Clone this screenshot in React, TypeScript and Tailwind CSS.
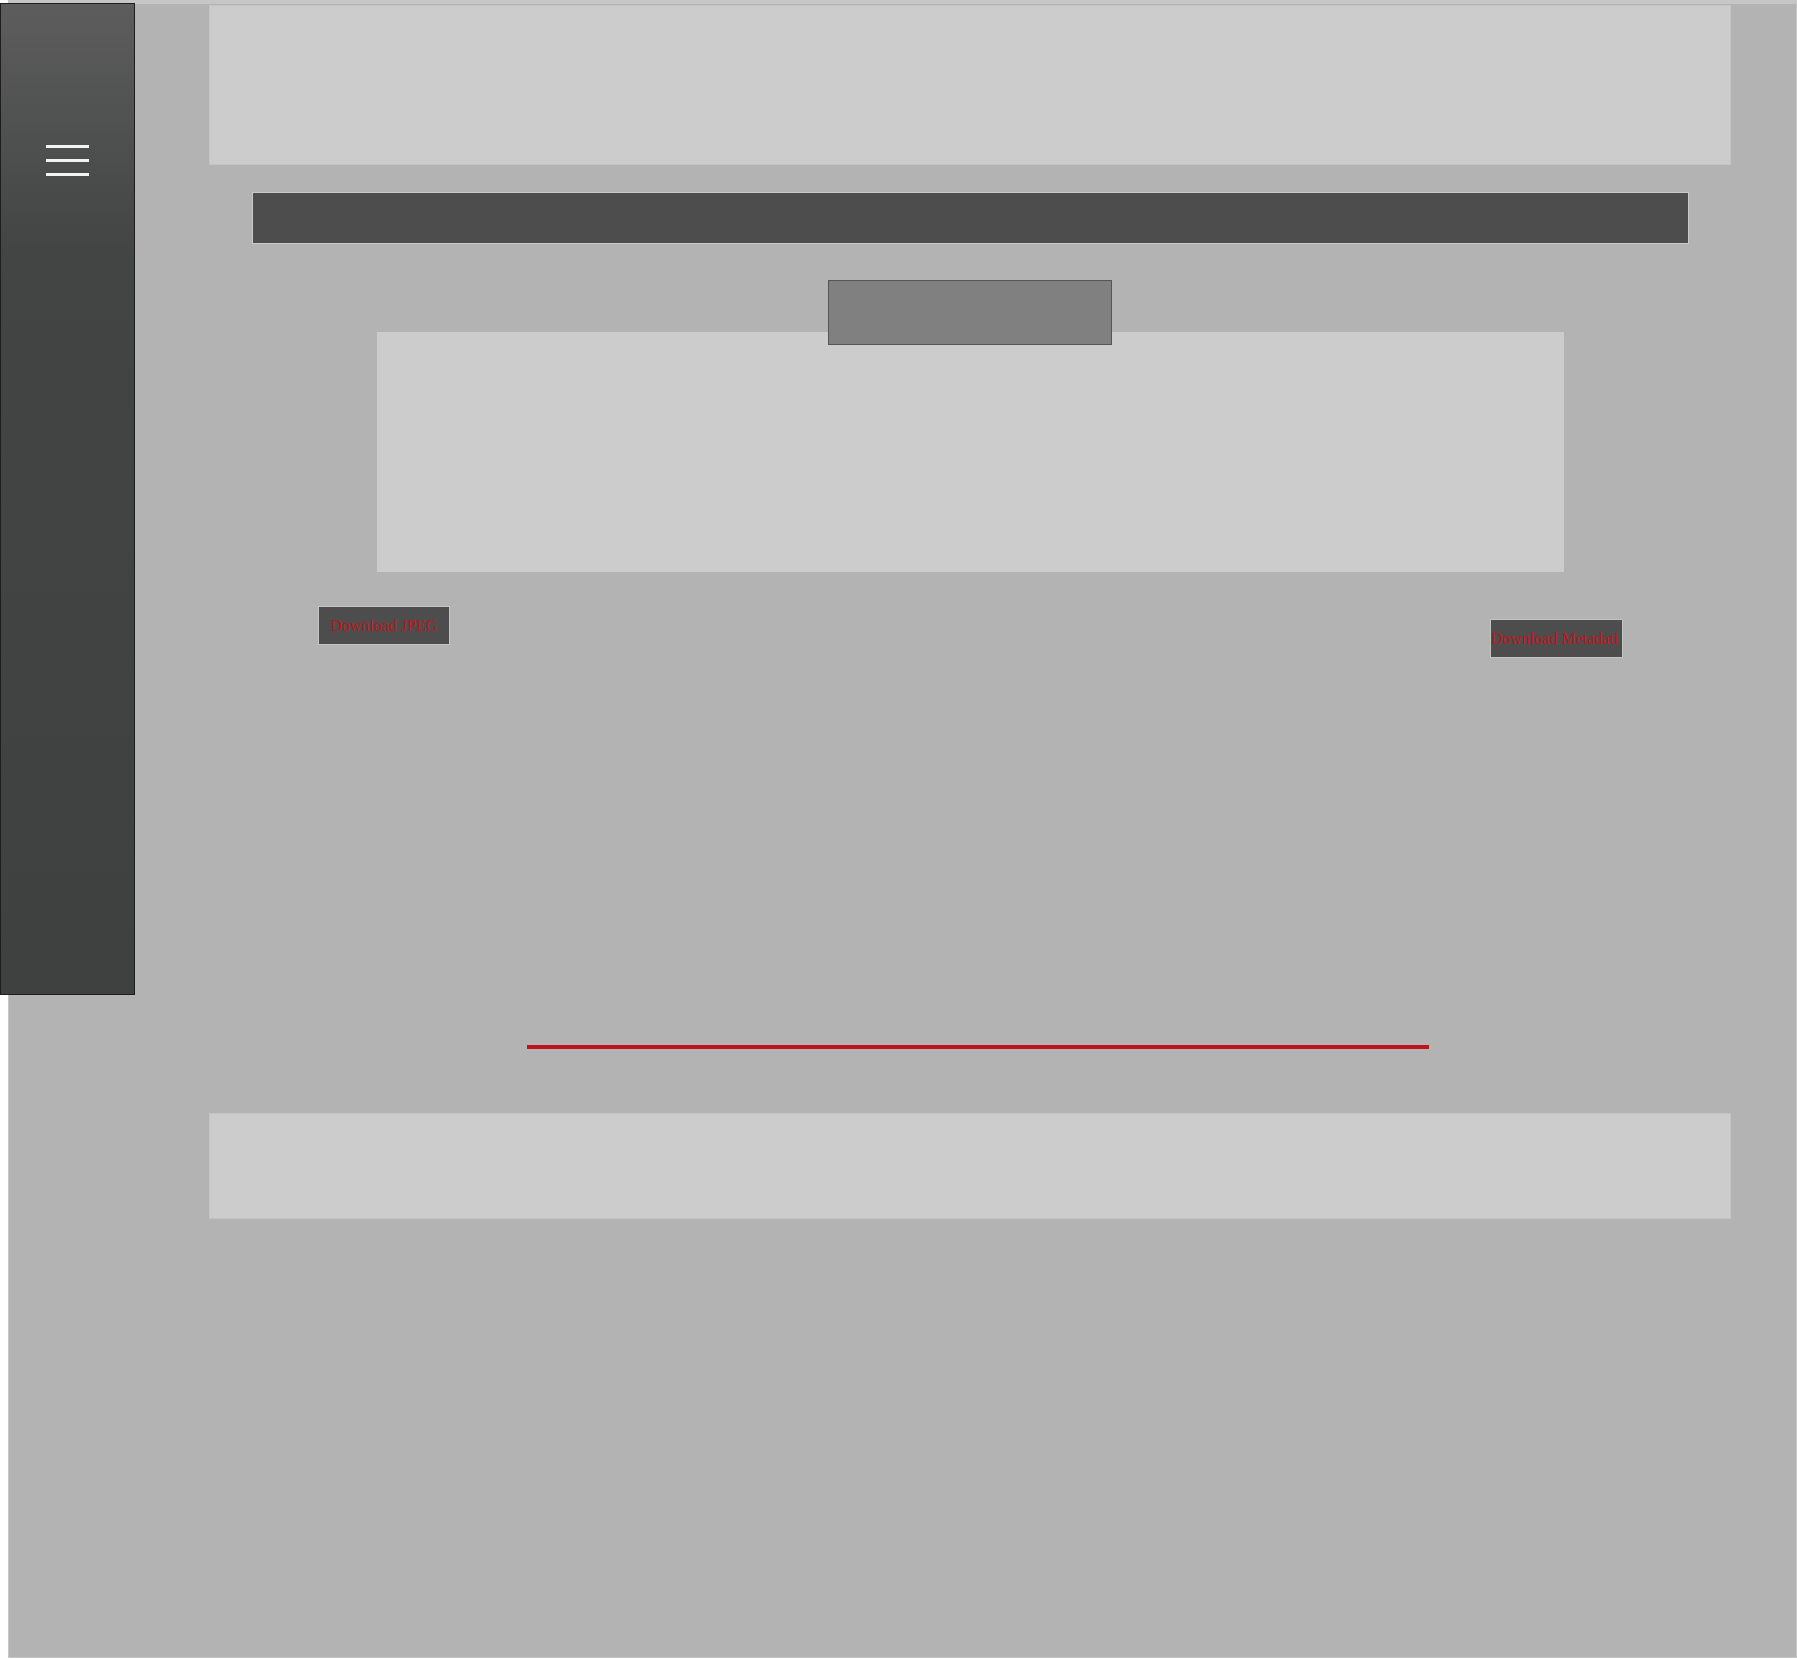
import React from "react";

export default function App() {
  return (
    <div className="relative w-[1797px] h-[1659px] bg-white overflow-hidden" style={{ fontFamily: '"Liberation Serif", serif' }}>
      {/* sidebar */}
      <div className="absolute left-0 top-[3px] w-[135px] h-[992px] z-20 border border-[#1e1e1e] bg-gradient-to-b from-[#5c5d5c] via-[#434544] via-25% to-[#3f4140] flex flex-col items-center">
        <div className="mt-[141px] flex flex-col gap-[11px]">
          <div className="w-[43px] h-[3px] bg-[#f2f2f2]" />
          <div className="w-[43px] h-[3px] bg-[#f2f2f2]" />
          <div className="w-[43px] h-[3px] bg-[#f2f2f2]" />
        </div>
      </div>

      {/* main */}
      <div className="ml-[8px] w-[1789px] h-[1658px] bg-[#b3b3b3] border border-[#c6c6c6] border-t-[4px] pl-[200px] pr-[65px] flex flex-col">
        <div className="mt-[1px] h-[160px] bg-[#cccccc] border border-[#c4c4c4]" />

        <div className="mt-[27px] ml-[43px] mr-[42px] h-[52px] bg-[#4d4d4d] border border-[#c9c9c9]" />

        <div className="relative z-10 mt-[36px] self-center w-[284px] h-[65px] bg-[#808080] border border-[#555555]" />

        <div className="-mt-[13px] self-center w-[1187px] h-[240px] bg-[#cccccc]" />

        <div className="mt-[34px] flex justify-between items-start pl-[109px] pr-[108px]">
          <button className="w-[132px] h-[39px] bg-[#4d4d4d] border border-[#c4c4c4] text-[#c0141c] text-[16px] leading-none flex items-center justify-center whitespace-nowrap">
            Download JPEG
          </button>
          <button className="mt-[13px] w-[133px] h-[39px] bg-[#4d4d4d] border border-[#c4c4c4] text-[#c0141c] text-[16px] leading-none flex items-center justify-start pl-0 whitespace-nowrap overflow-visible">
            Download Metadati
          </button>
        </div>

        <div className="mt-[387px] ml-[318px] w-[902px] h-[4px] bg-[#c0141c]" />

        <div className="mt-[64px] h-[106px] bg-[#cccccc] border border-[#c4c4c4]" />
      </div>
    </div>
  );
}
